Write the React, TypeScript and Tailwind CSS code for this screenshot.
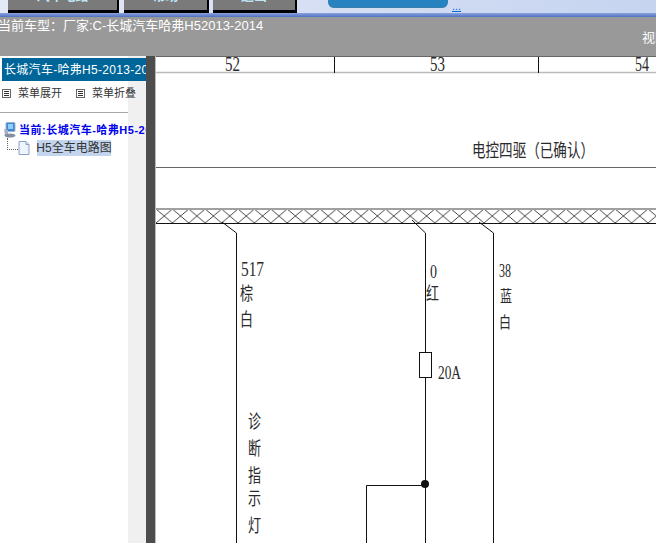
const cjk = "font-['Liberation_Sans','Noto_Sans_CJK_SC',sans-serif]";

function MenuIcon() {
  return (
    <span className="flex h-[9px] w-[9px] shrink-0 flex-col justify-center gap-px border border-[#666] bg-white px-px">
      <span className="h-px bg-[#333]" />
      <span className="h-px bg-[#333]" />
      <span className="h-px bg-[#333]" />
    </span>
  );
}

function ToolButton({ width, label }: { width: string; label: string }) {
  return (
    <div className={`${width} flex h-[13px] shrink-0 items-start justify-center border-r-2 border-b-[3px] border-black bg-[#7a7a7a]`}>
      <span className="-mt-[11px] text-[13px] leading-[14px] font-bold text-[#bfe6f5]">{label}</span>
    </div>
  );
}

function Computer() {
  return (
    <svg width="13" height="16" viewBox="0 0 13 16" className="shrink-0">
      <rect x="3" y="0.5" width="9" height="9" rx="1" fill="#3d86d8" stroke="#9fb0c8" />
      <path d="M5 2l5 0 0 5-5 0z" fill="#8fd0ff" />
      <path d="M1 7l4 1 0 6-3 0z" fill="#a8b4c4" />
      <ellipse cx="7" cy="13.5" rx="5.5" ry="2" fill="#8390a3" />
    </svg>
  );
}

function DocIcon() {
  return (
    <svg width="12" height="14" viewBox="0 0 12 14" className="shrink-0">
      <path d="M1 .5h7l3 3v10H1z" fill="#eef4fc" stroke="#8d9fc4" />
      <path d="M8 .5v3h3" fill="#d5e2f4" stroke="#8d9fc4" />
    </svg>
  );
}

function Sidebar() {
  return (
    <aside className="h-full w-[146px] shrink-0 overflow-hidden bg-[linear-gradient(to_right,#fff_128px,#f0f0f0_128px)] pt-0.5">
      <div className="ml-0.5 flex h-[23px] items-center overflow-hidden bg-[#006699] pl-0.5 text-xs tracking-[0.3px] whitespace-nowrap text-white">
        长城汽车-哈弗H5-2013-2014
      </div>
      <div className="flex h-[32px] w-[128px] items-center border-b border-[#a8a8a8] pb-[7px] pl-0.5 text-[11px] whitespace-nowrap text-[#333]">
        <MenuIcon />
        <span className="ml-[7px] shrink-0">菜单展开</span>
        <span className="ml-[14px] shrink-0"><MenuIcon /></span>
        <span className="ml-[7px] shrink-0">菜单折叠</span>
      </div>
      <div className="mt-[9px] flex h-[16px] items-center pl-[3px] whitespace-nowrap">
        <Computer />
        <span className="ml-[3px] text-[11px] font-bold tracking-[0.5px] text-[#0000ee]">当前:长城汽车-哈弗H5-2013-2014</span>
      </div>
      <div className="mt-0.5 flex h-[16px] items-center pl-[7px]">
        <div className="mb-2 h-[12px] w-[11px] shrink-0 border-b border-l border-dotted border-[#666]" />
        <DocIcon />
        <span className="ml-[7px] flex h-[16px] w-[74px] items-center justify-center bg-[#c3d5ee] text-xs whitespace-nowrap text-[#333]">H5全车电路图</span>
      </div>
    </aside>
  );
}

function Label({ x, y, children, w, size = 18 }: { x: number; y: number; children: string; w?: number; size?: number }) {
  return (
    <text
      x={x}
      y={y}
      fontSize={size}
      fontFamily="'Liberation Serif','Noto Sans CJK SC',serif"
      fill="#2a2a2a"
      textLength={w}
      lengthAdjust={w ? "spacingAndGlyphs" : undefined}
    >
      {children}
    </text>
  );
}

function Diagram() {
  return (
    <svg width="500" height="487" viewBox="156 56 500 487" className="block bg-white">
      <defs>
        <pattern id="hatch" x="156" y="209" width="16.4" height="14" patternUnits="userSpaceOnUse">
          <path d="M0 0L16.4 14M16.4 0L0 14" stroke="#333" strokeWidth="0.9" fill="none" />
        </pattern>
      </defs>
      <path d="M156 56.5H656" stroke="#666" />
      <path d="M156 72.5H656" stroke="#bbb" strokeWidth="1.5" />
      <path d="M334.5 57V73M538.5 57V73" stroke="#111" />
      <Label x={225} y={71} w={15} size={21}>52</Label>
      <Label x={430} y={71} w={15} size={21}>53</Label>
      <Label x={635} y={71} w={14} size={21}>54</Label>
      <Label x={472} y={157} w={122}>电控四驱（已确认）</Label>
      <path d="M156 167.5H656" stroke="#666" />

      <rect x="156" y="209" width="500" height="14" fill="url(#hatch)" />
      <path d="M156 209H656" stroke="#a0a0a0" strokeWidth="2" />
      <path d="M156 223.5H656" stroke="#111" />

      <path d="M222 222L236.5 233V543" stroke="#111" fill="none" />
      <path d="M412 220L425.5 233V352M425.5 377V543" stroke="#111" fill="none" />
      <path d="M479 222L493.5 233V543" stroke="#111" fill="none" />
      <rect x="419.5" y="352.5" width="12" height="25" stroke="#111" fill="none" />
      <circle cx="425" cy="484" r="4" fill="#111" />
      <path d="M425 485.5H366.5V543" stroke="#111" fill="none" />

      <Label x={241} y={276} w={23} size={20}>517</Label>
      <Label x={240} y={300} w={13}>棕</Label>
      <Label x={240} y={326} w={13}>白</Label>
      <Label x={430} y={278} w={7} size={19}>0</Label>
      <Label x={426} y={300} w={13}>红</Label>
      <Label x={499} y={277} w={12} size={18}>38</Label>
      <Label x={500} y={302} w={12} size={16}>蓝</Label>
      <Label x={499} y={328} w={12} size={16}>白</Label>
      <Label x={438} y={379} w={23} size={18}>20A</Label>
      <Label x={248} y={428} w={13}>诊</Label>
      <Label x={248} y={455} w={13}>断</Label>
      <Label x={248} y={482} w={13}>指</Label>
      <Label x={248} y={505} w={13}>示</Label>
      <Label x={248} y={532} w={13}>灯</Label>
    </svg>
  );
}

export default function App() {
  return (
    <div className={`${cjk} flex h-[543px] w-[656px] flex-col overflow-hidden bg-white`}>
      <div className="flex h-[13px] shrink-0 items-start overflow-hidden bg-[linear-gradient(to_right,#e4e9f7,#c6d4f0)] pl-2">
        <ToolButton width="w-[111px]" label="汽车电路" />
        <div className="ml-1 w-px" />
        <ToolButton width="w-[85px]" label="帮助" />
        <div className="ml-[3px] w-px" />
        <ToolButton width="w-[84px]" label="退出" />
        <div className="ml-[31px] h-[8px] w-[120px] rounded-b-md border-b border-[#3a7fb0] bg-[#2683c0]" />
        <span className="mt-[1px] ml-1 text-[11px] leading-[11px] text-[#0066dd] underline">...</span>
      </div>
      <div className="h-1 shrink-0 bg-[linear-gradient(to_bottom,#8ba3dc,#4f71c4)]" />
      <div className="flex h-[39px] shrink-0 flex-col bg-[#999] text-white">
        <div className="-ml-0.5 h-[17px] text-[13px] leading-[17px] whitespace-nowrap">当前车型：厂家:C-长城汽车哈弗H52013-2014</div>
        <div className="-mt-[5px] pl-[642px] text-[13px] leading-[17px] whitespace-nowrap">视图</div>
      </div>
      <div className="flex min-h-0 flex-1">
        <Sidebar />
        <div className="w-[9px] shrink-0 bg-[#4d4d4d]" />
        <div className="w-px shrink-0 bg-[#bbb]" />
        <main className="min-w-0 flex-1 overflow-hidden">
          <Diagram />
        </main>
      </div>
    </div>
  );
}
